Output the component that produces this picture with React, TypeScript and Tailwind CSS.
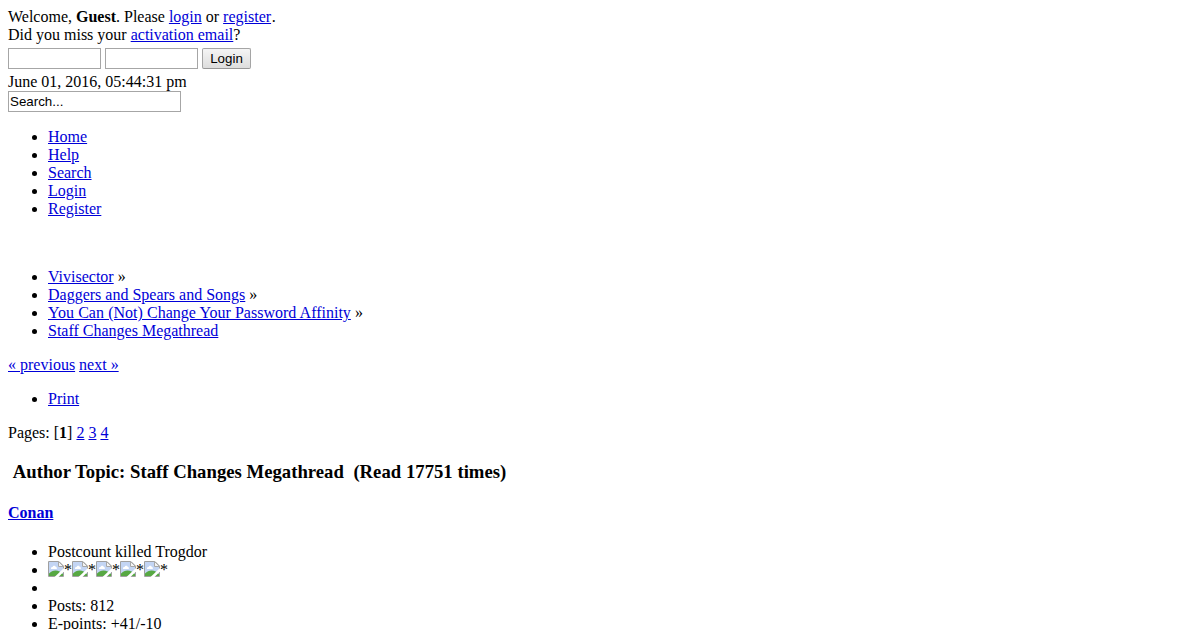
import type { ReactNode } from "react";

const menuItems = ["Home", "Help", "Search", "Login", "Register"];

const linkTree = [
  "Vivisector",
  "Daggers and Spears and Songs",
  "You Can (Not) Change Your Password Affinity",
  "Staff Changes Megathread",
];

function A({ children }: { children: ReactNode }) {
  return (
    <a href="#" className="text-[#0000d8] underline">
      {children}
    </a>
  );
}

function Star() {
  return (
    <span className="flex h-4 w-6">
      <svg width="16" height="16" viewBox="0 0 16 16" className="shrink-0">
        <path d="M0.5 0.5H11L15.5 5V15.5H0.5Z" fill="#fff" />
        <path d="M1 1H10.5V5.5H15V15H1Z" fill="#c3d5f4" />
        <path d="M3 8C2.6 6.4 4 5.8 4.6 6C5 4.4 7.4 4.4 7.8 6C9 6 9.2 7.4 8.6 8Z" fill="#fff" />
        <path d="M1 15V12.5C3 10.3 5 9.4 7.5 9.4C10.5 9.4 13 11 15 13V15Z" fill="#57a843" />
        <path d="M0.5 0.5H11L15.5 5V15.5H0.5Z" fill="none" stroke="#a0a0a0" />
        <path d="M10.5 0.5V5.5H15.5Z" fill="#f4f4f4" stroke="#a8a8a8" />
        <path d="M16 7V10.5L10.5 16H6.5Z" fill="#fff" />
      </svg>
      <span className="leading-[18px]">*</span>
    </span>
  );
}

export default function App() {
  return (
    <div className="h-[630px] overflow-hidden bg-white p-2 font-['Liberation_Serif',serif] text-base leading-[18px] text-black">
      <div>
        Welcome, <b className="font-bold">Guest</b>. Please <A>login</A> or <A>register</A>
        <span className="ml-[0.6px]">.</span>
      </div>
      <div>
        Did you miss your <A>activation email</A>?
      </div>

      <form className="mt-1 flex gap-1 font-['Liberation_Sans',sans-serif] text-[13.333px]">
        <input type="text" className="h-[21px] w-[93px] border border-[#a6a6a6] px-px" />
        <input type="password" className="h-[21px] w-[93px] border border-[#a6a6a6] px-px" />
        <button
          type="button"
          className="h-[21px] w-[49px] rounded-[2px] border border-[#a5a5a5] border-b-[#979797] bg-linear-to-b from-[#f5f5f5] to-[#dddddd] leading-[19px]"
        >
          Login
        </button>
      </form>

      <div className="mt-1">June 01, 2016, 05:44:31 pm</div>
      <input
        type="text"
        defaultValue="Search..."
        className="block h-[21px] w-[173px] border border-[#a6a6a6] px-px font-['Liberation_Sans',sans-serif] text-[13.333px]"
      />

      <ul className="mt-4 list-disc pl-10">
        {menuItems.map((item) => (
          <li key={item}>
            <A>{item}</A>
          </li>
        ))}
      </ul>

      <ul className="mt-[50px] list-disc pl-10">
        {linkTree.map((item, i) => (
          <li key={item} className={i === 2 ? "[word-spacing:0.2px]" : undefined}>
            <A>{item}</A>
            {i < linkTree.length - 1 && " »"}
          </li>
        ))}
      </ul>

      <div className="mt-4">
        <A>« previous</A> <A>next »</A>
      </div>

      <ul className="mt-4 list-disc pl-10">
        <li>
          <A>Print</A>
        </li>
      </ul>

      <div className="mt-4">
        Pages: [<b className="font-bold">1</b>] <A>2</A> <A>3</A> <A>4</A>
      </div>

      <h3 className="mt-[19px] text-[18.72px] leading-[21px] font-bold [word-spacing:0.08px]">
        &nbsp;Author Topic: Staff Changes Megathread &nbsp;(Read 17751 times)
      </h3>

      <h4 className="mt-[22px] font-bold">
        <A>Conan</A>
      </h4>

      <ul className="mt-[21px] list-disc pl-10">
        <li>Postcount killed Trogdor</li>
        <li>
          <span className="inline-flex h-4 align-top">
            {[1, 2, 3, 4, 5].map((n) => (
              <Star key={n} />
            ))}
          </span>
        </li>
        <li>&nbsp;</li>
        <li>Posts: 812</li>
        <li>E-points: +41/-10</li>
      </ul>
    </div>
  );
}
